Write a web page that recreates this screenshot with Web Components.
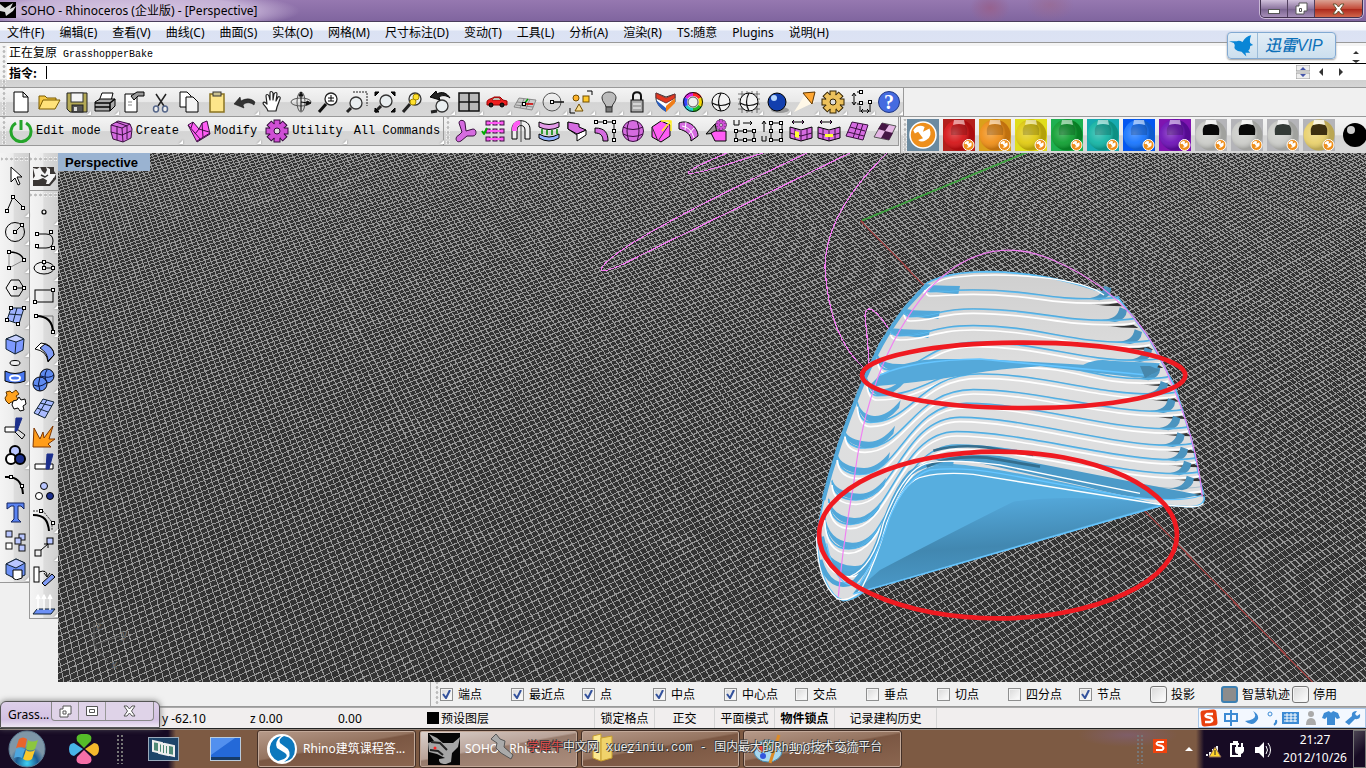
<!DOCTYPE html>
<html lang="zh-CN">
<head>
<meta charset="utf-8">
<title>SOHO - Rhinoceros</title>
<style>
html,body{margin:0;height:100%}
body{font:12px/16px "Noto Sans","Noto Sans CJK SC",sans-serif;color:#000;background:#f0f0f0;overflow:hidden}
</style>
</head>
<body>
<rhino-app></rhino-app>
<script>
const def=(name,css,html,hook)=>customElements.define(name,class extends HTMLElement{
  connectedCallback(){
    if(this.shadowRoot)return;
    const r=this.attachShadow({mode:'open'});
    const base='*{box-sizing:border-box}button{font:inherit;color:inherit;border:0;padding:0;margin:0;background:none}';
    r.innerHTML='<style>'+base+css+'</style>'+(typeof html==='function'?html(this):html);
    if(hook)hook(this,r);
  }
});

/* ---------- icon drawings, all on a 24 x 24 grid ---------- */
const h=(x,y,f='#fff')=>`<rect x="${x-1.5}" y="${y-1.5}" width="3" height="3" fill="${f}" stroke="#000"/>`;
const P=(d,f='none',s='#000',w=1)=>`<path d="${d}" fill="${f}" stroke="${s}" stroke-width="${w}" stroke-linejoin="round"/>`;
const C=(x,y,r,f='none',s='#000',w=1)=>`<circle cx="${x}" cy="${y}" r="${r}" fill="${f}" stroke="${s}" stroke-width="${w}"/>`;
const E=(x,y,a,b,f='none',s='#000',w=1)=>`<ellipse cx="${x}" cy="${y}" rx="${a}" ry="${b}" fill="${f}" stroke="${s}" stroke-width="${w}"/>`;
const R=(x,y,w,hh,f='none',s='#000',sw=1)=>`<rect x="${x}" y="${y}" width="${w}" height="${hh}" fill="${f}" stroke="${s}" stroke-width="${sw}"/>`;
const pk='#d56be0',hp='#ff5cf4',dp='#3a1040',bl='#7c9cf4',lb='#b9c6ff',nv='#1c2f8c';
const lens=(x,y)=>P(`M2 22L${x-5} ${y+5}`,'none','#222',3)+C(x,y,6,'#e9eef0','#333',1.3);
const gear=(f,s)=>{let d='';for(let i=0;i<8;i++){const a=i*45;d+=`<rect x="9" y="1" width="6" height="7" fill="${f}" stroke="${s}" transform="rotate(${a} 12 12)"/>`}return d+C(12,12,7,f,f)+C(12,12,3,'#ddd',s)};
const sphere=(c)=>`<circle cx="12" cy="12" r="9" fill="${c}" stroke="#000"/>`;
const I={
file:P('M5 2h9l5 5v15H5zM14 2v5h5','#fff'),
open:P('M2 19V6h6l2 2h9v3','#f5c945','#7a5b00')+P('M2 19l4-9h17l-5 9z','#ffe27a','#7a5b00'),
save:P('M2 3h20v19H5l-3-3z','#b5aa55','#222')+R(6,3,12,9,'#f4f4f4','#333')+R(7,15,11,7,'#555','#222')+R(9,17,3,4,'#ddd','none'),
print:P('M6 11l3-8h11l-2 8z','#fff')+P('M2 12l5-3h15v7l-5 5H2z','#aaa')+P('M2 13h15l5-4M2 17h15M17 13v8','none','#000',1.5),
props:P('M4 4h12v18H4z','#fff')+P('M10 6l6-4h7v4l-6 0-4 4z','#999')+P('M7 12h4M7 15h4','none','#888'),
cut:P('M7 4l8 12M17 4L9 16','none','#222',1.5)+E(7,19,2.5,3,'#eee','#556689',1.5)+E(16,19,2.5,3,'#eee','#556689',1.5),
copy:P('M3 2h7l4 4v11H3z','#fff')+P('M9 7h7l5 5v10H9z','#f4f4f4'),
paste:R(5,4,14,18,'#fde58a','#8a7320',1.5)+R(8,2,8,4,'#c9c090','#333'),
undo:P('M1 14l6-7 1 4c5-3 10-3 14 1l-1 3c-4-3-8-3-11 0l1 3z','#333','#111',.5),
pan:P('M7 21c-1-4-5-6-5-8 1-2 3 0 4 1L5 6c0-2 2-2 3 0l1 4V3c0-2 2-2 3 0v7l1-6c1-2 3-2 3 0l-1 7 2-4c1-1 3 0 2 2l-3 8-1 4z','#fff','#222',1.2),
rotate:E(12,12,10,4,'none','#555')+E(12,12,4,10,'none','#555')+P('M12 12V5M12 12v9M12 12l7 1')+P('M10 6h4L12 2zM18 11l4 2-5 2z','#111','#111'),
zoom:P('M2 22l7-8','none','#111',3)+C(14,9,6,'#fff','#222',1.3)+P('M11 8h6M14 5v6M11 11h6'),
zwin:'<path d="M8 2h14v14" fill="none" stroke="#222" stroke-dasharray="2 1"/>'+lens(11,13),
zext:lens(13,11)+P('M2 6V2h4zM18 2h4v4zM22 18v4h-4zM2 18v4h4z','#111'),
zsel:lens(14,9)+C(15,7,3,'#ffe12c','#a88b00')+C(12,12,3,'#ffe12c','#a88b00'),
undov:lens(13,16)+P('M1 7l6-6 1 3c5-3 10-1 13 4-4-3-8-3-11-1l1 3z','#222'),
grid4:R(2,3,20,18,'#b9b9b9','#111',1.5)+P('M12 3v18M2 12h20','none','#111',1.5),
car:P('M2 12c0-3 5-3 7-5h6l3 3 4 1v4H2z','#ef2020','#900')+C(6,15,2,'#222')+C(17,15,2,'#222')+P('M9 8h5l2 2H7z','#dfe','#600',.5),
cplane:P('M1 17L6 8l17 2-4 10zM4 12l17 2M3 15l17 2M11 9L7 18M17 9l-4 10','#ccc','#777',.8)+P('M11 14h9','none','#d00',1.5)+P('M11 14l4-5','none','#090',1.5)+h(11,14),
circ:C(11,12,9,'none','#555')+P('M11 12h12','none','#111',1.5)+h(11,12),
shapes:R(14,6,6,6,'#ffc92d','#704d00')+C(7,8,3,'#ffb42d','#704d00')+P('M10 14l4 7H6z','#f7dd91','#704d00')+P('M18 1h5v4M1 18v5h5'),
bulb:P('M9 17c0-3-4-5-4-9 0-8 14-8 14 0 0 4-4 6-4 9z','#bbb','#333')+R(9,17,6,5,'#777','#333'),
lock:P('M8 11V6c0-5 8-5 8 0v5','none','#111',2)+R(6,10,12,12,'#aaa','#111')+P('M8 14h8M8 18h8','none','#fff'),
layer:P('M3 3l10 4 9-3v8l-9 9C8 19 4 14 3 9z','#fff','#333')+P('M3 3l10 5 9-4v4l-9 5L3 8z','#e5361f','#733')+P('M3 10l10 8v4C8 19 4 15 3 10z','#2b5fc0','none')+P('M13 16l9-8v5l-9 9z','#f07d18','none'),
wheel:[['#f22','M12 4a8 8 0 0 1 7 4'],['#f5d800','M19 8a8 8 0 0 1 0 8'],['#2b2','M19 16a8 8 0 0 1-7 4'],['#2cc','M12 20a8 8 0 0 1-7-4'],['#34f','M5 16a8 8 0 0 1 0-8'],['#d2d','M5 8a8 8 0 0 1 7-4']].map(a=>P(a[1],'none',a[0],4)).join('')+C(12,12,9.5,'none','#111')+C(12,12,5,'#eee','#555'),
wire:sphere('#f3f3f3')+P('M3 13q9 5 18 0M12 3q-5 9 0 18','none','#111',1.2),
wireg:P('M1 4h22M1 9h22M1 14h22M1 19h22M5 1v22M10 1v22M15 1v22M20 1v22','none','#444',.7)+sphere('#f3f3f3')+P('M3 13q9 5 18 0M12 3q-5 9 0 18','none','#111',1.2),
blue:E(15,20,9,3,'#999','none')+sphere('#123fae')+C(9,8,3,'#b8d8ff','none'),
spot:P('M1 22L13 3l9 9z','#fff8e8','none')+P('M10 3l12-1-3 12z','#ffa733','#5d3500'),
gear:gear('#ecc15c','#332200'),
dims:P('M5 4v10M3 6l2-3 2 3M3 12l2 3 2-3M8 2h5M8 14h5M12 21h8M11 16v6M21 14v8M14 19l-2 2 2 2M18 19l2 2-2 2')+h(21,12)+h(12,2)+h(12,13),
help:C(12,12,10.5,'#456be0','#213784')+`<text x="12" y="19" text-anchor="middle" font-family="Liberation Serif" font-weight="bold" font-size="20" fill="#fff">?</text>`,
power:P('M7 4a10 10 0 1 0 10 0','none','#25a52b',3)+P('M12 1v10','none','#25a52b',3),
cube:P('M2 6l7-4 12 3 2 5-1 9-8 4-10-3-2-7z',pk,dp)+P('M2 6l11 3 8-4M13 9l1 14M2 13l11 3 9-4M8 7v14M7 3l11 4v13','none',dp),
mod:P('M1 6l5-3 6 7 3-6 5-2 3 13-13 8z',hp,dp)+P('M1 6l13 15M6 3l-2 6M12 10l-4 5M15 4l1 14M10 22l13-8M12 10l10 3','none',dp),
util:gear('#cf4fd5','#300838'),
u1:P('M9 13L6 4c0-4 6-3 6 0l1 8 7-2c4 0 4 7 0 7h-6l-6 5c-5 3-7-4-2-6z',pk,dp),
u2:[4,12,20].map(y=>[7,14,21].map(x=>R(x-2,y-2,4,4,hp,dp)).join('')).join('')+P('M7 4h14M7 12h14M7 20h14','none',hp,2)+P('M1 12l2 3 3-6','none','#0a0',2),
u3:P('M3 20V10C3-1 21-1 21 10v10h-5V11c0-6-8-6-8 0v9z','#eee')+P('M3 12V9C4 3 8 1 11 2v4C8 6 8 9 8 12z',hp,'none')+P('M12 1v22','none','#444'),
u4:P('M2 3q10 5 20 0v5q-10 5-20 0z','#e49be8')+P('M2 15q10 6 20 0v4q-10 6-20 0z','#8eb1ff')+P('M5 10v5M10 11v5M15 11v5M20 10v5','none','#080',1.5),
u5:P('M3 3l9 7v5l9-4v5l-9 6V16l-9-6z','#fff')+P('M3 3v7l9 5 9-4-7-3v-3z',pk),
u6:P('M3 3h18v18','none','#111',1)+h(3,3)+h(12,3)+h(21,3)+h(21,12)+h(21,21)+P('M2 9c10 0 13 5 13 13h-5c0-6-3-8-8-8z',pk),
u7:C(12,12,10.5,pk,dp)+P('M2 8q10 5 20 0M2 15q10 5 20 0M8 2q-4 10 0 20M16 2q4 10 0 20','none',dp),
u8:P('M3 8l9-6 9 4v11l-9 6-9-5z',hp)+P('M3 8l6 14L19 7','none','#333')+P('M12 2h10v10M22 2l-9 10','none','#fe2',1.5),
u9:P('M2 4c9-4 19 4 19 13l-7 5c0-7-5-10-12-12z',pk)+P('M9 3l-1 8M17 9l-5 6M5 7q9 1 12 12','none','#fff'),
u10:gear('#cf4fd5','#300838').replace(/^/,'<g transform="translate(10 0) scale(.5)">')+'</g>'+P('M1 15l9-10 2 9z','#999')+P('M10 12h11v10H10l-4-8z',hp),
u11:P('M1 1v5h5V1M10 4h9M17 2l2 2-2 2M3 12v9h18v-9z')+h(3,12)+h(21,12)+h(3,21)+h(12,21)+h(21,21)+h(12,12),
u12:P('M1 17v5h4v-5M3 13V2L1 5M3 2l2 3M10 4v17h11V4z')+h(10,4)+h(20,4)+h(10,12)+h(20,12)+h(10,21)+h(20,21),
u13:P('M3 3h12M5 1L3 3l2 2M13 1l2 2-2 2M1 8l11 3 11-3v11l-11 3-11-3z',pk)+P('M1 14l11 3 11-3M6 10v11M12 12v10M18 10v11','none',dp)+P('M6 12l4 1v6l-4-1z','#ff3','none'),
u14:P('M3 3h12M5 1L3 3l2 2M13 1l2 2-2 2M1 8l11 3 11-3v11l-11 3-11-3z',pk)+P('M1 14l11 3 11-3M6 10v11M12 12v10M18 10v11','none',dp)+P('M8 15h8v3H8z','#ff3','none'),
u15:P('M1 17L7 3l16 3-5 15zM5 8l15 4M3 13l16 4M13 4L8 19M18 5l-5 15',pk,dp),
u16:P('M1 18L9 4l14 3-7 14z','#e4b5e4','#555')+P('M9 4l7 2-4 6-7-2zM12 12l8 2-4 7-8-2z','#451545','none'),
arrow:P('M8 3v15l4-4 3 7 2-1-3-7h5z','#fff','#000'),
poly:P('M4 19L10 5l10 10')+h(4,19)+h(10,5)+h(20,16),
circle2:C(12,12,9.5)+P('M12 12l7-7')+h(12,12)+h(19,5),
arc:P('M6 4v16l15-8','none','#888')+P('M6 4q12 0 15 8','none','#000',1.5)+h(6,4)+h(6,20)+h(21,12),
hex:P('M3 12l5-8h8l5 8-5 8H8z')+P('M12 12h9')+h(12,12)+h(21,12),
srf:P('M8 4h13l-5 16-12-4z','#9fb3ff','#123')+P('M14 4l-4 14M6 10l13 1','none','#123')+h(8,4)+h(21,4)+h(4,16)+h(15,20),
box:P('M3 7l10-4 8 4-1 11-8 4-9-5z','#7d99ff','#123')+P('M3 7l10 3 8-3-8-4z','#c7d1ff','#123')+P('M13 10l-1 12','none','#123'),
cyl:P('M2 11q10 5 20 0v10q-10 4-20 0z','#4a78f0')+E(12,3,5,2.5,'#eee')+E(12,18,5,2.5,'#4a78f0','#fff',2),
puzzle:P('M2 10l2-3-1-3 4-1 2 2 4-3 3 4-3 2 2 3-3 4-4-1-2 2-3-3z','#ffa31f','#5b3400')+P('M10 13l4-1 2-3 2 3 4-1 1 5-3 2 1 4-4 1-2-3-4 1-2-4z','#fff'),
trim:P('M2 11h12v5H2z','#fff')+P('M14 13l8 6-3 4-7-7z','#ddd')+P('M13 2h6l-5 13h-2z',nv,nv),
tri:C(12,7,5,lb,'#000',2)+C(8,15,5,'#fff','#000',2)+C(17,15,5,nv,'#000',2),
arc2:P('M2 5c12-1 17 5 18 17','none','#000',2)+h(8,5)+h(19,14),
T:P('M4 3h17v6l-3-3h-3v13l3 3H8l3-3V6H8L4 9z','#5a83f2','#14245c'),
blocks:[[3,3],[16,6],[12,10],[3,15],[16,17]].map((a,i)=>R(a[0],a[1],6,6,i==3?'#fff':lb,'#111')).join(''),
cube2:P('M3 8l10-5 9 4v12l-9 4-10-5z','#6d90f5','#123')+P('M3 8l10-5 9 4-9 5z','#b9c6ff','#123')+P('M10 14h9v8l-6 2-3-2z','#fff'),
rhino:P('M1 3h21v4l2 3v5l-6 7H1z','#3a3634','none')+P('M1 4l4 1 3-2 2 4 3 3 2-4-1-3 4 2v5l6 0-2 4-4-1-2 4-5-3-5 2-6 0 3-4z','#f4f4f4','none')+P('M16 13l6-2-1 4-4 5h-3zM4 8l3 2-3 3z','#f4f4f4','none')+P('M9 11l4 2 3-2','none','#333',1.5),
pt:C(12,12,2,'#eee','#000',1.2),
c1:P('M5 6h9q7 0 7 7t-7 7H5')+h(5,6)+h(19,4)+h(5,18)+h(21,20),
ell:E(12,12,10,6)+P('M12 12V6M12 12h9')+h(12,12)+h(12,6)+h(21,12),
rec:R(3,6,18,12)+h(3,18)+h(21,6),
fil:P('M4 4h17v17','none','#777')+P('M4 4q17 0 17 17','none','#000',2)+h(4,4)+h(21,20),
bend:P('M3 9l6-6q12 1 13 12l-6 7Q15 11 3 9z','#fff')+P('M13 4q9 4 9 11l-6 6Q16 13 8 8z','#7f9bf5'),
sp2:C(15,8,7,'#5e8aef')+C(8,16,7,'#5e8aef')+P('M2 17q6 3 12-2M8 9q-3 7 0 14M9 8q8 3 13-1M15 2q-4 6 0 12','none','#061340'),
net:P('M2 17L11 3l11 3-9 16zM5 12l11 4M8 7l12 3M15 4L6 19','#a9baff','#123'),
boom:P('M1 23L2 4l6 11 3-7 1 6 9-12-4 13 6 0-7 5 3 3z','#ff9d1a','#7e3600'),
cut2:P('M3 12h18v5H3z','#fff')+P('M15 2h6l-4 15h-3z',nv,nv),
dots:C(12,6,3.5,lb)+C(7,16,3.5,'#fff')+C(18,16,3.5,nv),
arc3:P('M1 7c12 0 15 6 16 16','none','#000',2)+'<path d="M1 3h10l9 11v8" fill="none" stroke="#333" stroke-dasharray="2 1"/>'+h(9,3)+h(21,15),
scl:R(3,14,6,6,'#eee')+R(15,2,6,6,lb)+P('M9 14l7-6M12 8h4v4'),
rot:R(2,3,5,15,'#fff')+P('M7 8q8-3 8 4M12 9l3 4 3-4')+P('M20 10l3 3-10 9-3-3z','#7f9bf5'),
ext:P('M5 17h18l-4 5H1z','#6d90f5','#123')+P('M6 18V5M12 18V5M18 18V5M4 7l2-4 2 4M10 7l2-4 2 4M16 7l2-4 2 4','#fff','#fff',1.5)
};
const svg=(n,s=24)=>`<svg width="${s}" height="${s}" viewBox="0 0 24 24" aria-hidden="true">${I[n]||''}</svg>`;

/* ---------- tool button ---------- */
def('tool-button',`:host{display:block;flex:none;width:28px;height:28px;position:relative}
button{display:grid;place-items:center;width:100%;height:100%}
:host([fly])::after{content:"";position:absolute;right:0;bottom:1px;border:2px solid;border-color:transparent #fff #fff transparent;filter:drop-shadow(0 0 1px #888)}`,
e=>`<button aria-label="${e.getAttribute('icon')}">${svg(e.getAttribute('icon'))}</button>`);
def('tool-label',`:host{display:flex;flex:none;height:28px;align-items:center;position:relative}
button{display:flex;align-items:center;gap:3px;font:12px/16px "Liberation Mono",monospace;white-space:nowrap}
:host(:not([plain]))::after{content:"";position:absolute;right:-4px;bottom:1px;border:2px solid;border-color:transparent #fff #fff transparent;filter:drop-shadow(0 0 1px #888)}`,
e=>`<button>${e.hasAttribute('icon')?svg(e.getAttribute('icon')):''}<slot></slot></button>`);
def('tool-grip',`:host{display:block;flex:none;width:7px;align-self:stretch;background:radial-gradient(circle,#bbb 1px,#fff 2px,transparent 2px) 2px 3px/4px 5px repeat-y}
:host([across]){width:auto;height:7px;background:radial-gradient(circle,#bbb 1px,#fff 2px,transparent 2px) 3px 2px/5px 4px repeat-x}`,'');

/* ---------- title bar ---------- */
def('title-bar',`:host{display:flex;height:22px;flex:none;background:radial-gradient(ellipse 20px 16px at 990px 8px,#96628f,transparent),radial-gradient(ellipse 24px 16px at 1050px 5px,#9b688c99,transparent),radial-gradient(ellipse 170px 22px at 130px 11px,#d8c8e3,#c4b0d5 70%,transparent),linear-gradient(#9678b0,#80659f);border-bottom:1px solid #4a3d5c}
.l{width:16px;height:16px;margin:2px 5px 0 0;background:#000}
h1{margin:0;flex:1;font:12px/22px "Noto Sans","Noto Sans CJK SC",sans-serif}
.w{display:flex;height:18px;margin-right:3px;border:1px solid #40304e;border-top:0;border-radius:0 0 5px 5px;overflow:hidden;box-shadow:0 0 0 1px #c9b8d6}
.w button{width:27px;background:linear-gradient(#d0c0db,#8d76a0 50%,#78628e 51%,#a68eb8);border-right:1px solid #51405f;display:grid;place-items:center}
.w button:last-child{width:47px;border:0;background:linear-gradient(#dba293,#c44d3b 50%,#a92418 51%,#d1664c)}`,
`<svg class="l" viewBox="0 0 16 16"><path d="M0 2l5 4 8-5-3 6 6-3-3 5-7 5-1-4-5-1z" fill="#ddd"/></svg><h1>SOHO - Rhinoceros (企业版) - [Perspective]</h1>
<div class="w"><button aria-label="min"><svg width="12" height="12"><rect x=".5" y="6.5" width="11" height="4" fill="#fff" stroke="#555"/></svg></button><button aria-label="restore"><svg width="13" height="13"><path d="M4 1h8v8H9v3H1V4h3z" fill="#fff" stroke="#555"/><path d="M4.500 6.500h2v3h-2z" stroke="#555" fill="none"/></svg></button><button aria-label="close"><svg width="13" height="12"><path d="M1 1h3l2.500 3L9 1h3L8.500 6 12 11H9L6.500 8 4 11H1l3.500-5z" fill="#fff" stroke="#653"/></svg></button></div>`);

/* ---------- menu ---------- */
def('menu-bar',`:host{display:flex;flex:none;height:21px;padding-left:7px;gap:15px;align-items:center;background:linear-gradient(#fff,#f3f5fb 40%,#dbe2f3 45%,#dde3f4);border-bottom:1px solid #999;white-space:nowrap}
button{line-height:19px}`,
'文件(F)|编辑(E)|查看(V)|曲线(C)|曲面(S)|实体(O)|网格(M)|尺寸标注(D)|变动(T)|工具(L)|分析(A)|渲染(R)|TS:随意|Plugins|说明(H)'.split('|').map(t=>`<button>${t}</button>`).join(''));

/* ---------- command area ---------- */
def('command-area',`:host{display:flex;flex:none;height:45px;padding-top:3px;background:linear-gradient(#f4f4f4 36px,#d0d0d0 37px,#d6d6d6);border-bottom:1px solid #999}
.b{flex:1;height:34px;background:#fff;display:flex;flex-direction:column}
.h{flex:none;height:18px;border-bottom:1px solid #000;padding:0 6px 0 2px;line-height:17px;font-family:"Liberation Mono","Noto Sans CJK SC",monospace;display:flex;justify-content:space-between;font-size:12px}
.h span{font-size:10px;font-weight:400}
.c{flex:1;display:flex;align-items:center;padding-left:2px;gap:4px}
label{font:700 12px/15px "Noto Sans CJK SC",sans-serif;width:33px}
input{flex:1;min-width:0;height:13px;border:0;border-left:1px solid #000;padding:0;outline:0;font:11px "Liberation Mono",monospace}
.s{display:flex;width:70px;gap:8px;align-items:center}`,
`<tool-grip></tool-grip><div class="b"><div class="h"><div>正在复原<span> GrasshopperBake</span></div><svg width="8" height="17"><path d="M1 8l3-3 3 3zM0 14h8l-4 3z" fill="#333"/></svg></div><div class="c"><label for="cmd">指令:</label><input id="cmd"><div class="s"><svg width="14" height="14"><path d="M0 0h14v6H0zM0 8h14v6H0z" fill="#eee" stroke="#999"/><path d="M4 5l3-3 3 3zM4 9h6l-3 3z" fill="#45a"/></svg><svg width="32" height="10"><path d="M5 1v8L1 5zM21 1v8l4-4z" fill="#333"/></svg></div></div></div>`);

/* ---------- toolbars ---------- */
const tools=(s)=>s.split(' ').map(n=>{const f=n.endsWith('+');return `<tool-button icon="${f?n.slice(0,-1):n}"${f?' fly':''}></tool-button>`}).join('');
def('tool-rows',`:host{display:grid;flex:none;grid-template-columns:max-content minmax(0,1fr);grid-template-rows:29px 36px;background:#f0f0f0}
.a,.b{display:flex;background:linear-gradient(#f4f4f4,#e8e8e8 50%,#d4d4d4 52%,#d8d8d8);overflow:hidden}
.a{width:904px;border-right:1px solid #999;border-bottom:1px solid #999}
.x{border-bottom:1px solid #999}
.b{height:29px;width:899px;border-bottom:1px solid #999;border-right:1px solid #999}
.b>div{display:flex}
.t{width:444px;border-right:1px solid #999;flex:none}
.t tool-label{margin-right:8px}
.t tool-label:nth-of-type(1){margin-left:2px}
.t tool-label:last-child{margin-left:3px}
.m{display:flex;overflow:hidden;gap:4px;padding-top:2px;margin-left:-4px;border-left:1px solid #999;background:linear-gradient(#f4f4f4,#e8e8e8 50%,#d4d4d4 52%,#d8d8d8)}
.m tool-grip{width:6px;margin-right:-4px}`,
`<div class="a"><tool-grip></tool-grip>${tools('file open save+ print+ props cut copy paste undo+ pan rotate zoom zwin zext zsel undov+ grid4+ car+ cplane+ circ+ shapes+ bulb+ lock+ layer+ wheel+ wire wireg+ blue+ spot+ gear+ dims+ help+')}</div><div class="x"></div>
<div class="b"><div class="t"><tool-grip></tool-grip><tool-label icon="power" plain>Edit mode</tool-label><tool-label icon="cube">Create</tool-label><tool-label icon="mod">Modify</tool-label><tool-label icon="util">Utility</tool-label><tool-label>All Commands</tool-label></div><div><tool-grip></tool-grip>${tools('u1 u2 u3 u4 u5 u6 u7 u8 u9 u10 u11 u12 u13 u14 u15 u16')}</div></div>
<div class="m"><tool-grip></tool-grip>${['#6b8aa0,logo','#b3201c,#d40f12','#dba01b,#ef8c12','#e0dd1c,#e0c90c','#1eb050,#0a9d2d','#17aab0,#0fb3a3','#0457f0,#1272ff','#7f14b0,#6a0db5','#b4b4b8,chrome','#b4b4b8,chrome2','#b4b4b8,chrome3','#b4b4b8,gold','#ddd,black'].map(v=>{const[a,b]=v.split(',');return `<mat-ball tile="${a}" ball="${b}"></mat-ball>`}).join('')}</div>`);
def('mat-ball',`:host{display:block;flex:none;width:32px;height:32px}button{display:block;width:32px;height:32px}`,e=>{
const t=e.getAttribute('tile'),b=e.getAttribute('ball');
const badge=(x,y,r)=>`<circle cx="${x}" cy="${y}" r="${r}" fill="#ee8f1c" stroke="#fff" stroke-width="${r>8?1.5:1}"/><g transform="translate(${x-r} ${y-r}) scale(${r/8})"><path d="M2 5Q5 1 9 3L8 6l4-2q2 5-2 7-3 2-5 0l3-1-3-4-2 1z" fill="#fff"/></g>`;
let s;
if(b==='logo')s=`<rect width="32" height="32" fill="${t}"/>`+badge(16,16,13);
else if(b==='black')s=`<circle cx="16" cy="16" r="12" fill="#000"/><circle cx="12" cy="11" r="4" fill="#fff" opacity=".8"/>`;
else{
const m=b[0]==='c',g=b==='gold',f=m?'#c9cac6':g?'#e8cf68':b;
s=`<defs><radialGradient id="r" cx=".35" cy=".45"><stop offset="0" stop-color="#fff" stop-opacity=".3"/><stop offset=".6" stop-color="#fff" stop-opacity=".08"/><stop offset="1" stop-opacity=".2"/></radialGradient></defs><rect width="32" height="32" fill="${t}"/><circle cx="16" cy="16" r="15.500" fill="${f}"/><circle cx="16" cy="16" r="15.500" fill="url(#r)"/>
<path d="M8 16q-1-8 2-10 6-2 12 0 3 2 2 10z" fill="${m?(b==='chrome3'?'#333a36':'#090909'):g?'#3c2f10':'#000'}" opacity="${m||g?1:.18}"/><path d="M11 1h10l1 5q-6-2-12 0z" fill="#fff" opacity="${m||g?.8:.55}"/>`+badge(25.5,26,5.5)}
return `<button aria-label="material"><svg width="32" height="32" viewBox="0 0 32 32">${s}</svg></button>`});

/* ---------- side toolbars ---------- */
def('side-bars',`:host{display:flex;flex:none;width:58px;align-items:flex-start}
div{background:linear-gradient(90deg,#f4f4f4,#ececec 45%,#dcdcdc 50%,#cfcfcf)}
.a{width:30px;padding:2px 1px 0;border-right:1px solid #999;border-bottom:1px solid #999}
.b{width:28px}.c{border-bottom:1px solid #999;padding:2px 0 0}.d{border-bottom:1px solid #999;border-left:1px solid #999;margin-left:-1px}`,
`<div class="a"><tool-grip across></tool-grip>${tools('arrow poly+ circle2+ arc+ hex+ srf+ box+ cyl+ puzzle trim tri+ arc2 T blocks cube2+')}</div>
<div class="b"><div class="c"><tool-grip across></tool-grip>${tools('rhino')}</div><div class="d"><tool-grip across></tool-grip>${tools('pt+ c1+ ell+ rec+ fil+ bend+ sp2+ net+ boom cut2 dots arc3+ scl+ rot ext+')}</div></div>`);

/* ---------- perspective viewport ---------- */
function gridPath(){
  const O=[862,221],VX=[-270,-930],VY=[3670,-930],a=.0026,b=.0014;
  let d='';
  const ray=(V,p)=>{const t=(720-V[1])/(p[1]-V[1]),s=(140-V[1])/(p[1]-V[1]);
    return `M${(V[0]+(p[0]-V[0])*s).toFixed(1)} 140L${(V[0]+(p[0]-V[0])*t).toFixed(1)} 720`};
  const at=(V,k)=>[(O[0]+k*V[0])/(1+k),(O[1]+k*V[1])/(1+k)];
  for(let i=-300;i<500;i++){
    if(1+a*i>.3)d+=ray(VY,at(VX,a*i));
    if(1+b*i>.3)d+=ray(VX,at(VY,b*i));
  }
  return d;
}
function tower(){
  /* rim of each floor: left start, left low point, crest, right tip */
  const L=[[375,150,390,168,520,163,958,187],[312,225,330,243,520,220,1005,252],[272,285,300,300,520,270,1050,318],[232,360,268,403,530,320,1080,372],
  [200,430,232,480,650,382,1105,427],[172,500,212,560,540,415,1128,473],[135,590,195,637,520,462,1150,525],[112,660,180,716,500,503,1165,577],
  [96,735,168,793,480,545,1178,627],[86,790,152,866,470,588,1188,670],[74,840,146,940,470,628,1198,712],[62,890,152,1010,470,663,1206,757]];
  let s='';
  const line=(l,o,c,w)=>{const[x,y,bx,by,px,py,rx,ry]=l,k=(px-bx);
    return `<path d="M${x} ${y+o}Q${x+4} ${by+o} ${bx} ${by+o}C${bx+k*.38} ${by+o} ${px-k*.55} ${py+o} ${px} ${py+o}C${px+190} ${py+o} ${rx-230} ${ry+o+6} ${rx-60} ${ry+o+2}Q${rx-10} ${ry+o} ${rx} ${ry+o-4}" fill="none" stroke="${c}" stroke-width="${w}"/>`};
  L.forEach((l,i)=>{
    const[x,y,bx,by,px,py,rx,ry]=l;
    const q=i<4?30:80;
    s+=`<path d="M${x} ${y-18}Q${x+10} ${by-36} ${bx+10} ${by-32}Q${bx+50} ${by-30} ${bx+90} ${by-q}L${bx+85} ${by-q+24}Q${bx+45} ${by-8} ${bx} ${by-14}Q${x+14} ${by-22} ${x} ${y}z" fill="#53a8da"/>`;
    s+=`<path d="M${rx-100} ${ry-13}Q${rx-52} ${ry-12} ${rx-46} ${ry-50}L${rx-24} ${ry-42}Q${rx-26} ${ry-12} ${rx-60} ${ry-6}z" fill="#4b94bf"/>`;
    if(i<11)s+=line(l,-13,'#5cbdf4',5);
    s+=line(l,-14,'#3d7fa4',1)+line(l,0,'#fff',5);
    s+=`<path d="M${rx-90} ${ry+5}Q${rx-50} ${ry+10} ${rx-5} ${ry+2}L${rx+10} ${ry+12}Q${rx-40} ${ry+12} ${rx-90} ${ry+5}z" fill="#333"/>`;
  });
  return s;
}
def('perspective-view',`:host{display:block;flex:1;min-width:0;position:relative;background:#333;overflow:hidden}
svg{display:block;width:100%;height:100%}
.n{position:absolute;left:0;top:0;width:92px;height:18px;background:#9ab3d1;font:700 13px/17px "Liberation Sans",sans-serif;text-align:left;padding-left:7px}`,
`<svg viewBox="58 153 1308 529" preserveAspectRatio="xMinYMin slice" role="img" aria-label="Perspective">
<defs><linearGradient id="sh" x1=".4" y1="0" x2=".6" y2="1"><stop offset="0" stop-color="#55a9dc"/><stop offset=".5" stop-color="#3c7ea5"/><stop offset="1" stop-color="#4b9bcb"/></linearGradient>
<linearGradient id="wall" x2="0" y2="1"><stop offset="0" stop-color="#cfcfcf"/><stop offset=".3" stop-color="#dfdfdf"/><stop offset="1" stop-color="#dbdddf"/></linearGradient></defs>
<path d="${gridPath()}" stroke="#969696" fill="none" shape-rendering="crispEdges"/>
<g fill="none" shape-rendering="crispEdges"><path d="M861 221L1030 151" stroke="#439c43" stroke-width="2"/><path d="M861 221L1330 700" stroke="#994545" stroke-width="1.500"/>
<g stroke="#f37df3" stroke-width="1.200"><path d="M727 153q-38 16-39 20 2 4 75-20M807 153Q606 248 601 270q5 4 40-15L850 153M887 153q-62 60-62 115 4 70 40 101M869 364q-1-20-4-48c1-14 12-6 25 15"/></g></g>
<g stroke="#666" fill="none"><path d="M94 645v-22M94 645l26-9M94 645l14 17"/></g><g font-family="Liberation Sans" font-size="12" font-weight="bold" fill="#666"><text x="96" y="630">z</text><text x="121" y="638">y</text><text x="111" y="669">x</text></g>
<g transform="translate(800 240) scale(.33333)">
<path d="M380 130Q440 95 570 95Q780 100 958 178L1010 245 1050 300 1085 365 1125 440 1150 520 1175 600 1195 700 1213 775Q1210 803 1160 800L1090 795 200 1045Q170 1080 130 1082Q65 1060 50 900Q60 800 120 600L180 450 240 310 320 195z" fill="url(#wall)" stroke="#5cbdf4" stroke-width="5"/>
<path d="M380 135Q330 190 320 200Q240 300 180 450Q110 620 70 780" fill="none" stroke="#53a8da" stroke-width="12"/>
${tower()}
<path d="M205 440L240 405Q320 360 400 357L540 357 850 374Q890 355 930 362L1080 370 1058 403Q1030 418 990 410L720 379Q560 390 500 405Q340 430 205 440z" fill="#55a9da"/>
<path d="M240 405Q340 360 540 357L1040 405" stroke="#66c5ff" stroke-width="5" fill="none"/>
<path d="M1020 378l30 0 30 12-45 24z" fill="#4787ac"/>
<path d="M395 660Q550 630 660 660L1200 765 1150 775Q1040 790 860 740L520 665z" fill="#4c9ac8"/>
<path d="M160 1060Q200 1010 230 940Q280 770 330 720Q370 672 460 672Q600 680 1090 795L155 1062z" fill="#57aedf"/>
<path d="M240 990Q430 890 640 785Q830 760 1080 793L160 1060z" fill="url(#sh)" opacity=".8"/>
<path d="M65 890Q90 1010 160 1000Q210 980 240 890Q280 755 330 700Q380 660 460 672M60 960Q90 1060 165 1025Q215 970 240 900" fill="none" stroke="#4fa5d7" stroke-width="14"/>
<path d="M400 632Q470 612 560 622L700 645M380 680Q450 645 560 653L720 680" fill="none" stroke="#336d8d" stroke-width="8"/>
<g fill="none" stroke="#fff" stroke-width="4"><path d="M50 890Q50 1020 110 1075Q150 1090 185 1045Q230 960 260 850Q310 720 370 710Q430 695 520 703L1090 795 1160 800Q1200 802 1210 790"/><path d="M150 1010Q220 980 250 850Q310 690 380 670Q450 655 600 675L1020 760"/><path d="M370 160Q400 120 460 112Q580 98 720 112T912 165"/></g>
<path d="M80 910Q110 1060 180 1030Q240 930 270 830Q320 710 390 690Q480 680 600 700L980 770Q1150 790 1206 765M160 1062L1090 795" fill="none" stroke="#66c5ff" stroke-width="4"/>
<path d="M380 155Q560-40 780 70Q1020 180 1110 420Q1190 600 1207 770M380 155Q200 370 160 740Q130 900 115 1070" fill="none" stroke="#f080f3" stroke-width="3.500"/>
<g fill="none" stroke="#ef1a21" stroke-width="14"><ellipse cx="671" cy="406" rx="485" ry="98"/><ellipse cx="594" cy="885" rx="537" ry="250"/></g>
</g></svg><button class="n">Perspective</button>`);

/* ---------- object snaps ---------- */
const tick=`appearance:none;margin:0;width:13px;height:13px;border:1px solid #8e8f8f;background:linear-gradient(135deg,#d8d8d8,#fff);box-shadow:inset 0 0 0 1px #f4f4f4`;
def('snap-bar',`:host{display:flex;flex:none;height:25px;padding-left:430px;border-bottom:1px solid #999}
.g{display:flex;border-left:1px solid #aaa;padding-left:2px}
label{display:flex;align-items:center;width:71px;flex:none;gap:5px;white-space:nowrap;font:12px/16px "Noto Sans CJK SC",sans-serif}
input{${tick}}
input:checked{background:url("data:image/svg+xml,%3Csvg xmlns='http://www.w3.org/2000/svg' viewBox='0 0 11 11'%3E%3Cpath d='M2 5l3 4 4-8' fill='none' stroke='%2332519c' stroke-width='2'/%3E%3C/svg%3E"),linear-gradient(135deg,#d8d8d8,#fff)}
.big input{width:17px;height:17px;border-radius:3px;border-color:#777}
.big{gap:4px}.on input{background:#8c8c8c;box-shadow:none;border-color:#3c7fb1;border-width:2px}`,
`<div class="g"><tool-grip></tool-grip>${['端点','最近点','点','中点','中心点','交点','垂点','切点','四分点','节点'].map((t,i)=>`<label><input type="checkbox"${i<5||i==9?' checked':''}>${t}</label>`).join('')}<label class="big"><input type="checkbox">投影</label><label class="big on"><input type="checkbox">智慧轨迹</label><label class="big"><input type="checkbox">停用</label></div>`);

/* ---------- status bar ---------- */
def('status-bar',`:host{display:flex;flex:none;height:21px;padding-left:162px;background:#f1eeee;border-top:1px solid #aaa;line-height:21px;white-space:nowrap}
span{width:88px;flex:none}.l{width:168px;display:flex;align-items:center;gap:2px;padding-left:1px}.l::before{content:"";width:12px;height:12px;background:#000}
button{width:60px;flex:none;border-right:1px solid #d5d5d5;line-height:20px;padding-top:1px}
.f{border-left:1px solid #d5d5d5;width:61px}.h{width:102px}b{font-weight:700}
nav{margin-left:auto;width:168px;background:#f3f8ff;border:1px solid #a9c6e6;display:flex;align-items:center}`,
`<span>y -62.10</span><span>z 0.00</span><span>0.00</span><span class="l">预设图层</span><button class="f">锁定格点</button><button>正交</button><button>平面模式</button><button><b>物件锁点</b></button><button class="h">记录建构历史</button>
<nav><svg width="166" height="20" viewBox="0 0 166 20"><rect x="2" y="2" width="16" height="16" rx="3" fill="#e8400f" transform="rotate(-6 10 10)"/><path d="M14 6H8q-3 2 0 3l4 1q3 3-1 4H6" fill="none" stroke="#fff" stroke-width="2.500"/><g fill="none" stroke="#3d8bd4" stroke-width="2"><path d="M26 6h12v7H26zM32 2v16"/><circle cx="71" cy="6" r="2" stroke-width="1"/><path d="M77 12q1 3-2 5"/></g><g fill="#3d8bd4"><path d="M54 3q7 8-8 10 8 7 13-2 1-5-5-8zM83 4h17v12H83zM125 5l5-2q2 3 4 0l5 2 2 5-3 1-2-2v8h-8V9l-2 2-3-1zM146 14l7-6q-1-5 5-5l-2 3 2 2 3-2q1 6-5 5l-6 6z"/></g><path d="M85 7h13M85 10h13M85 13h13M88 5v9M92 5v9M96 5v9" stroke="#fff" fill="none"/><circle cx="112" cy="6" r="3" fill="#aaa"/><path d="M107 17q0-7 5-7t5 7z" fill="#aaa"/></svg></nav>`);
def('mini-window',`:host{display:flex;position:absolute;left:0;bottom:40px;width:160px;height:27px;border:1px solid #555;border-radius:6px 6px 0 0;background:linear-gradient(#ded0ea,#d3c1e2 70%,#eee6f3);box-shadow:0 0 6px #777;padding-left:7px;line-height:25px}
span{width:43px}div{display:flex;height:19px;border:1px solid #888;border-top:0;border-radius:0 0 4px 4px;background:#dfd3e8}
button{width:27px;border-right:1px solid #999;display:grid;place-items:center}button:last-child{width:47px;border:0}`,
`<span>Grass...</span><div><button aria-label="restore"><svg width="13" height="13"><path d="M4 1h8v8H9v3H1V4h3zM4 6h3v3H4z" fill="#fff" stroke="#555"/></svg></button><button aria-label="max"><svg width="12" height="10"><path d="M.5.5h11v9H.5zM3.500 3.500h5v3h-5z" fill="#fff" stroke="#555"/></svg></button><button aria-label="close"><svg width="13" height="12"><path d="M1 1h3l2.500 3L9 1h3L8.500 6 12 11H9L6.500 8 4 11H1l3.500-5z" fill="#fff" stroke="#555"/></svg></button></div>`);
def('vip-badge',`:host{position:absolute;right:30px;top:32px;width:109px;height:27px}
button{width:100%;height:100%;display:flex;align-items:center;border:1px solid #82a9d2;border-radius:4px;background:linear-gradient(#e3edf6,#cbdfee);box-shadow:0 1px 2px #999;font:italic 500 16px/24px "Liberation Sans","Noto Sans CJK SC",sans-serif;color:#0d70b8;gap:7px;white-space:nowrap}
svg{border-right:1px solid #9bbbd8;flex:none}`,
`<button><svg width="30" height="25" viewBox="0 0 30 25"><path d="M1 8h8q3-1 6 1 3-6 9-7-2 5-1 8l3 2-3 1q0 3-2 5l2 2h-5l1 4-5-5q-9-1-7-7l-1-2z" fill="#0a86d6"/></svg>迅雷VIP</button>`);

/* ---------- task bar ---------- */
def('task-button',`:host{display:block;flex:none;width:159px;height:38px}
button{width:100%;height:100%;display:flex;align-items:center;gap:5px;padding-left:8px;color:#fff;border:1px solid #443027;border-radius:3px;background:linear-gradient(170deg,#b79b8b,#94735f 45%,#7b5743 48%,#8b6650);box-shadow:inset 0 0 0 1px #c2a898;white-space:nowrap;overflow:hidden}
:host([active]) button{background:linear-gradient(170deg,#dcd2ce,#b9a398 45%,#977b6c 48%,#ad8e7d)}`,`<button><slot name="i"></slot><slot></slot></button>`);
def('task-bar',`:host{display:flex;flex:none;height:40px;position:relative;align-items:center;background:linear-gradient(90deg,#170b24 168px,transparent 176px calc(100% - 170px),#170b24 calc(100% - 162px)),radial-gradient(ellipse 50px 12px at 1128px 6px,#80608099,transparent),#7d5a43;border-top:1px solid #222;box-shadow:inset 0 1px #96887e;color:#fff}
.q{display:flex;align-items:center;width:257px;flex:none}
.q svg{display:block}
.s{margin-left:8px}.c{margin-left:22px}.g{width:8px;height:30px;margin:0 24px 0 16px;background:radial-gradient(circle,#777 1px,transparent 1px) 0 0/4px 4px}.v{margin-left:31px}
.t{display:flex;gap:3px}
p{position:absolute;left:527px;top:11px;margin:0;font:12px/16px "Liberation Mono","Noto Sans CJK SC",monospace;white-space:pre;color:#eee;text-shadow:0 0 1px #222,1px 1px #333,-1px -1px #444}
em{font-style:normal;color:#e05050}
.m{position:absolute;left:490px;top:4px}
.r{margin-left:auto;display:flex;align-items:center;height:100%}
.r .g{margin:0 9px 0 0}.r time{width:76px;text-align:center;line-height:18px}
.d{width:13px;height:38px;border:1px solid #777;background:linear-gradient(135deg,#8887,#170b24 60%)}`,
`<div class="q"><button class="s" aria-label="开始"><svg width="38" height="38" viewBox="0 0 38 38"><defs><radialGradient id="o" cy=".9"><stop offset="0" stop-color="#3fd2f5"/><stop offset=".6" stop-color="#1c5c93"/><stop offset="1" stop-color="#7f97a8"/></radialGradient></defs><circle cx="19" cy="19" r="18" fill="url(#o)" stroke="#5d7c94"/><path d="M11 9q4-3 8 0l-2 9q-4-2-9 0z" fill="#e8642c"/><path d="M20 10q4 3 10 0l-3 9q-5 3-9 0z" fill="#8cc63e"/><path d="M8 19q4-2 9 0l-3 9q-4-2-8 0z" fill="#4da7e0"/><path d="M18 20q4 3 9 0l-3 9q-4 3-9 0z" fill="#fbc82c"/></svg></button>
<button class="c" aria-label="clover"><svg width="32" height="32" viewBox="0 0 32 32"><path d="M16 15L9 8Q7 2 13 1h6q6 1 4 7z" fill="#56bd29"/><path d="M17 16l9-6q5 0 5 6t-5 7z" fill="#f5b92c"/><path d="M16 17l7 7q2 6-4 7h-6q-6-1-4-7z" fill="#f56fa7"/><path d="M15 16l-9 7q-5-1-5-7t5-6z" fill="#48b4e8"/></svg></button><div class="g"></div>
<button aria-label="switch"><svg width="31" height="24"><rect x=".5" y=".5" width="30" height="23" fill="#1d4469" stroke="#9ab"/><path d="M5 4l9 2v10l-9-2zM11 6l9 2v10l-9-2zM17 7l9 2v10l-9-2z" fill="#4f8a77" stroke="#eee" stroke-width="2"/></svg></button><button class="v" aria-label="desktop"><svg width="31" height="24"><rect x=".5" y=".5" width="30" height="23" fill="#2469d8" stroke="#bcd"/><path d="M1 1h24L1 18z" fill="#72aaff" opacity=".6"/><path d="M1 20h29v3H1z" fill="#163b68"/></svg></button></div>
<div class="t"><task-button><svg slot="i" width="32" height="32" viewBox="0 0 32 32"><circle cx="16" cy="16" r="15" fill="#fff"/><path d="M15 3A13 13 0 0 0 12 28l6-2q5-3 1-6l-8-5q-3-6 4-12zM18 3q11 2 11 13T18 29q9-6 4-13l-8-6q-2-4 4-7z" fill="#0d78bd"/></svg>Rhino建筑课程答...</task-button><task-button active><svg slot="i" width="32" height="32" viewBox="0 0 32 32"><rect width="32" height="32" fill="#060606"/><path d="M1 1l8 4 6 5 10 0 7-6-2 10-6 6-1 9-5 2q-8 0-7-5l6-1-8-4-8-2-1-9 6-2z" fill="#a5a5a5"/><path d="M3 9l9 1 7 7M2 17l8 1 5 4" stroke="#222" stroke-width="2" fill="none"/><circle cx="7" cy="15" r="1.500" fill="#f22"/></svg>SOHO - Rhinoc...</task-button><task-button><svg slot="i" width="32" height="32" viewBox="0 0 32 32"><path d="M3 3l8-2v27l-8-3z" fill="#fce991" stroke="#c79e2f"/><path d="M11 5l11-2v22l-11 3z" fill="#f0d36b" stroke="#c79e2f"/></svg>2</task-button><task-button><svg slot="i" width="32" height="32" viewBox="0 0 32 32"><ellipse cx="16" cy="18" rx="14" ry="11" fill="#a8d8ef" stroke="#4b8eb0"/><circle cx="9" cy="16" r="3" fill="#e43"/><circle cx="16" cy="12" r="3" fill="#3b3"/><circle cx="11" cy="23" r="3" fill="#35d"/><path d="M27 2L18 30" stroke="#dc8b27" stroke-width="3"/></svg>无标题 - 画图</task-button></div>
<svg class="m" width="26" height="28"><path d="M1 6l5-5 4 5 5 2-1 6 9 8-2 4-10-6-5-5 1-5z" fill="#aaa" stroke="#555"/></svg>
<p><em>学犀牛</em>中文网 xueziniu.com - 国内最大的Rhino技术交流平台</p>
<div class="r"><div class="g"></div><svg width="124" height="38" viewBox="0 0 124 38"><rect x="0" y="9" width="14" height="14" fill="#f0430e"/><path d="M11 12H5q-3 2 0 3l4 1q3 2 0 4H3" fill="none" stroke="#fff" stroke-width="2"/><path d="M32 21l4-4 4 4z" fill="#fff"/><path d="M54 26v-2M57 26v-4M60 26v-7M64 26V16" stroke="#eee" stroke-width="2"/><path d="M62 17l6 10H56z" fill="#ffd52e" stroke="#865"/><path d="M62 20v5" stroke="#222"/><path d="M85 26h-7V14h8M80 12h5" fill="none" stroke="#fff" stroke-width="2"/><path d="M82 17h9v4q-1 3-3 3v3h-3v-3q-3 0-3-3zM83 13h2v4h-2zM88 13h2v4h-2z" fill="#fff"/><path d="M102 17h4l5-5v16l-5-5h-4z" fill="#fff"/><path d="M113 16q3 4 0 8M115 13q5 7 0 14" stroke="#fff" fill="none"/></svg><time>21:27<br>2012/10/26</time><button class="d" aria-label="desktop"></button></div>`);

def('rhino-app',`:host{display:flex;flex-direction:column;height:100vh;position:relative;overflow:hidden;background:#f0f0f0}
main{display:flex;flex:1;min-height:0}`,
`<title-bar></title-bar><menu-bar></menu-bar><command-area></command-area><tool-rows></tool-rows><main><side-bars></side-bars><perspective-view></perspective-view></main><snap-bar></snap-bar><status-bar></status-bar><task-bar></task-bar><mini-window></mini-window><vip-badge></vip-badge>`);
</script>
</body>
</html>
